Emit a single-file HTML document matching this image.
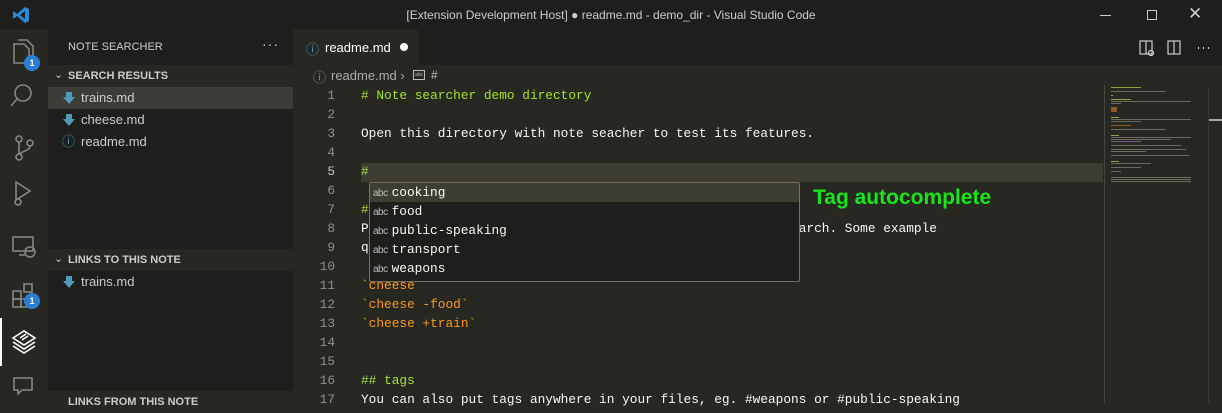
<!DOCTYPE html>
<html><head><meta charset="utf-8"><style>
*{margin:0;padding:0;box-sizing:border-box}
body{width:1222px;height:403px;overflow:hidden;background:#272822;font-family:"Liberation Sans",sans-serif;position:relative;color:#ccc}
.abs{position:absolute}
.title{left:0;top:0;width:1222px;height:30px;background:#1e1f1c}
.act{left:0;top:30px;width:48px;height:373px;background:#272822}
.side{left:48px;top:30px;width:245px;height:373px;background:#1e1f1c}
.tabs{left:293px;top:30px;width:929px;height:35px;background:#1e1f1c}
.mono{font-family:"Liberation Mono",monospace;font-size:12.8px;white-space:pre}
.ln{position:absolute;left:293px;width:42px;text-align:right;color:#90908a}
.code{position:absolute;left:361px;color:#f8f8f2}
.g{color:#a6e22e}.o{color:#fd971f}
.item{position:absolute;left:48px;width:245px;height:22px;font-size:13px;color:#ccc;line-height:22px}
.hdr{position:absolute;left:48px;width:245px;height:22px;font-size:11px;font-weight:bold;color:#ccc;line-height:22px;padding-left:20px}
.sug{position:absolute;left:370px;width:429px;height:19px;line-height:19px}
.sug span.a{font-family:"Liberation Sans",sans-serif;font-size:10px;color:#bbb;margin:0 4px 0 3px;letter-spacing:-0.5px}
.arr{position:absolute;left:15px;top:5px}
</style></head><body>
<div class="abs title"></div>
<svg class="abs" style="left:12px;top:6px" width="18" height="18" viewBox="0 0 18 18"><path d="M13 1 L17 3 V15 L13 17 L5 10 L2 12.5 L1 12 V6 L2 5.5 L5 8 Z M13 5 L8 9 L13 13 Z" fill="#2a8ad4"/></svg>
<div class="abs" style="left:0;top:8px;width:1222px;text-align:center;font-size:12px;color:#ccc">[Extension Development Host] ● readme.md - demo_dir - Visual Studio Code</div>
<div class="abs" style="left:1100px;top:15px;width:11px;height:1px;background:#ccc"></div>
<div class="abs" style="left:1147px;top:10px;width:10px;height:10px;border:1px solid #ccc"></div>
<div class="abs" style="left:1188px;top:4px;font-size:17px;color:#ccc">✕</div>

<div class="abs act"></div>
<svg class="abs" style="left:0;top:30px" width="48" height="373" viewBox="0 0 48 373" fill="none" stroke="#858585" stroke-width="1.6">
<path d="M14 14 h10 l5 5 v14 h-15z M18 10 h9 l6 6 v14"/>
<circle cx="23" cy="63" r="8"/><path d="M17 69 l-6 7"/>
<circle cx="19" cy="109" r="3"/><circle cx="19" cy="127" r="3"/><circle cx="30" cy="113" r="3"/><path d="M19 112 v12 M30 116 c0 5 -10 5 -10 9"/>
<path d="M16 152 l14 9 -14 9z"/><circle cx="18" cy="172" r="3"/>
<rect x="13" y="207" width="20" height="14"/><path d="M19 225 h6"/><circle cx="30" cy="222" r="5" />
<rect x="13" y="261" width="8" height="8"/><rect x="13" y="269" width="8" height="8"/><rect x="21" y="269" width="8" height="8"/><rect x="24" y="254" width="8" height="8"/>
<path d="M14 348 h18 v12 h-10 l-4 4 v-4 h-4z"/>
</svg>
<svg class="abs" style="left:0;top:318px" width="48" height="48" viewBox="0 0 48 48"><rect x="0" y="0" width="2" height="48" fill="#fff"/>
<g fill="none" stroke="#fff" stroke-width="1.6"><path d="M13 20 l11 -7 11 7 -11 7z"/><path d="M13 24 l11 7 11 -7"/><path d="M13 28 l11 7 11 -7"/><path d="M20 20 l6 -4 M22 22 l6 -4"/></g></svg>
<div class="abs" style="left:24px;top:55px;width:16px;height:16px;border-radius:8px;background:#2a7fd4;color:#fff;font-size:9px;font-weight:bold;text-align:center;line-height:16px">1</div>
<div class="abs" style="left:24px;top:293px;width:16px;height:16px;border-radius:8px;background:#2a7fd4;color:#fff;font-size:9px;font-weight:bold;text-align:center;line-height:16px">1</div>

<div class="abs side"></div>
<div class="abs" style="left:68px;top:41px;font-size:11px;color:#ccc">NOTE SEARCHER</div>
<div class="abs" style="left:262px;top:36px;font-size:14px;color:#ccc;letter-spacing:1px">···</div>
<div class="hdr" style="top:65px;background:#272822">SEARCH RESULTS</div>
<div class="abs" style="left:54px;top:68px;font-size:11px;color:#ccc">⌄</div>
<div class="item" style="top:87px;background:#3d3d37"><svg class="arr" width="12" height="12" viewBox="0 0 12 12"><path d="M3 0h6v5h3l-6 7-6-7h3z" fill="#519aba"/></svg><span style="position:absolute;left:33px">trains.md</span></div>
<div class="item" style="top:109px"><svg class="arr" width="12" height="12" viewBox="0 0 12 12"><path d="M3 0h6v5h3l-6 7-6-7h3z" fill="#519aba"/></svg><span style="position:absolute;left:33px">cheese.md</span></div>
<div class="item" style="top:131px"><span style="position:absolute;left:14px;color:#519aba">ⓘ</span><span style="position:absolute;left:33px">readme.md</span></div>
<div class="hdr" style="top:249px;background:#272822">LINKS TO THIS NOTE</div>
<div class="abs" style="left:54px;top:252px;font-size:11px;color:#ccc">⌄</div>
<div class="item" style="top:271px"><svg class="arr" width="12" height="12" viewBox="0 0 12 12"><path d="M3 0h6v5h3l-6 7-6-7h3z" fill="#519aba"/></svg><span style="position:absolute;left:33px">trains.md</span></div>
<div class="hdr" style="top:391px;background:#272822">LINKS FROM THIS NOTE</div>

<div class="abs tabs"></div>
<div class="abs" style="left:293px;top:30px;width:125px;height:35px;background:#272822"></div>
<div class="abs" style="left:306px;top:39px;font-size:13px;color:#519aba">ⓘ</div>
<div class="abs" style="left:325px;top:40px;font-size:13px;color:#fff">readme.md</div>
<div class="abs" style="left:400px;top:43px;width:8px;height:8px;border-radius:4px;background:#fff"></div>
<svg class="abs" style="left:1138px;top:40px" width="80" height="16" viewBox="0 0 80 16" fill="none" stroke="#ccc" stroke-width="1.2"><rect x="2" y="1" width="12" height="13"/><path d="M8 1v13"/><circle cx="13" cy="13" r="2.5"/><rect x="30" y="1" width="12" height="13"/><path d="M36 1v13"/><path d="M60 8h1 M65 8h1 M70 8h1" stroke-width="2"/></svg>

<div class="abs" style="left:313px;top:67px;font-size:13px;color:#519aba">ⓘ</div>
<div class="abs" style="left:331px;top:68px;font-size:13px;color:#aaa">readme.md ›</div>
<div class="abs" style="left:413px;top:70px;width:12px;height:10px;border:1px solid #bbb;font-size:5px;color:#bbb;text-align:center;line-height:8px">abc</div>
<div class="abs" style="left:431px;top:68px;font-size:12px;color:#bbb">#</div>

<div class="abs" style="left:361px;top:163px;width:742px;height:19px;background:#3e3d32"></div>
<div class="abs" style="left:1104px;top:85px;width:1px;height:318px;background:#464741"></div>

<div class="mono">
<div class="ln" style="top:88px">1</div><div class="code g" style="top:88px"># Note searcher demo directory</div>
<div class="ln" style="top:107px">2</div>
<div class="ln" style="top:126px">3</div><div class="code" style="top:126px">Open this directory with note seacher to test its features.</div>
<div class="ln" style="top:145px">4</div>
<div class="ln" style="top:164px;color:#c2c2bf">5</div><div class="code g" style="top:164px">#</div>
<div class="ln" style="top:183px">6</div>
<div class="ln" style="top:202px">7</div><div class="code g" style="top:202px">#</div>
<div class="ln" style="top:221px">8</div><div class="code" style="top:221px">P                                                        arch. Some example</div>
<div class="ln" style="top:240px">9</div><div class="code" style="top:240px">q</div>
<div class="ln" style="top:259px">10</div>
<div class="ln" style="top:278px">11</div><div class="code o" style="top:278px">`cheese`</div>
<div class="ln" style="top:297px">12</div><div class="code o" style="top:297px">`cheese -food`</div>
<div class="ln" style="top:316px">13</div><div class="code o" style="top:316px">`cheese +train`</div>
<div class="ln" style="top:335px">14</div>
<div class="ln" style="top:354px">15</div>
<div class="ln" style="top:373px">16</div><div class="code g" style="top:373px">## tags</div>
<div class="ln" style="top:392px">17</div><div class="code" style="top:392px">You can also put tags anywhere in your files, eg. #weapons or #public-speaking</div>
</div>

<div class="abs" style="left:369px;top:182px;width:431px;height:100px;background:#1e1f1c;border:1px solid #75715e;border-radius:2px"></div>
<div class="abs" style="left:370px;top:183px;width:429px;height:19px;background:#3e3d32"></div>
<div class="mono" style="color:#f8f8f2">
<div class="sug" style="top:183px"><span class="a">abc</span>cooking</div>
<div class="sug" style="top:202px"><span class="a">abc</span>food</div>
<div class="sug" style="top:221px"><span class="a">abc</span>public-speaking</div>
<div class="sug" style="top:240px"><span class="a">abc</span>transport</div>
<div class="sug" style="top:259px"><span class="a">abc</span>weapons</div>
</div>
<div class="abs" style="left:813px;top:186px;font-size:21px;font-weight:bold;color:#19e619">Tag autocomplete</div>

<svg class="abs" style="left:1110px;top:85px" width="90" height="100" viewBox="0 0 90 100">
<g fill="#6a6a60"><rect x="1" y="2" width="30" height="1" fill="#8aa83a"/><rect x="1" y="6" width="55" height="1"/><rect x="1" y="10" width="2" height="1" fill="#8aa83a"/><rect x="1" y="14" width="20" height="1" fill="#8aa83a"/><rect x="1" y="16" width="80" height="1"/><rect x="1" y="18" width="10" height="1"/><rect x="1" y="22" width="6" height="5" fill="#8a5a20"/><rect x="1" y="32" width="8" height="1" fill="#8aa83a"/><rect x="1" y="34" width="80" height="1"/><rect x="1" y="36" width="30" height="1"/><rect x="1" y="40" width="20" height="1" fill="#8a5a20"/><rect x="1" y="44" width="55" height="1"/><rect x="1" y="50" width="8" height="1" fill="#8aa83a"/><rect x="1" y="52" width="80" height="1"/><rect x="1" y="54" width="60" height="1"/><rect x="1" y="56" width="30" height="1" fill="#7a5a8a"/><rect x="1" y="60" width="70" height="1"/><rect x="1" y="64" width="75" height="1"/><rect x="1" y="66" width="35" height="1"/><rect x="1" y="70" width="78" height="1"/><rect x="1" y="76" width="8" height="1" fill="#8aa83a"/><rect x="1" y="78" width="40" height="1"/><rect x="1" y="82" width="30" height="1"/><rect x="1" y="86" width="10" height="1" fill="#7a5a8a"/><rect x="1" y="92" width="80" height="1"/><rect x="1" y="94" width="80" height="1"/><rect x="1" y="96" width="80" height="1"/></g></svg>
<div class="abs" style="left:1208px;top:88px;width:1px;height:315px;background:#3a3a35"></div>
<div class="abs" style="left:1209px;top:119px;width:13px;height:2px;background:#aaa"></div>
</body></html>
